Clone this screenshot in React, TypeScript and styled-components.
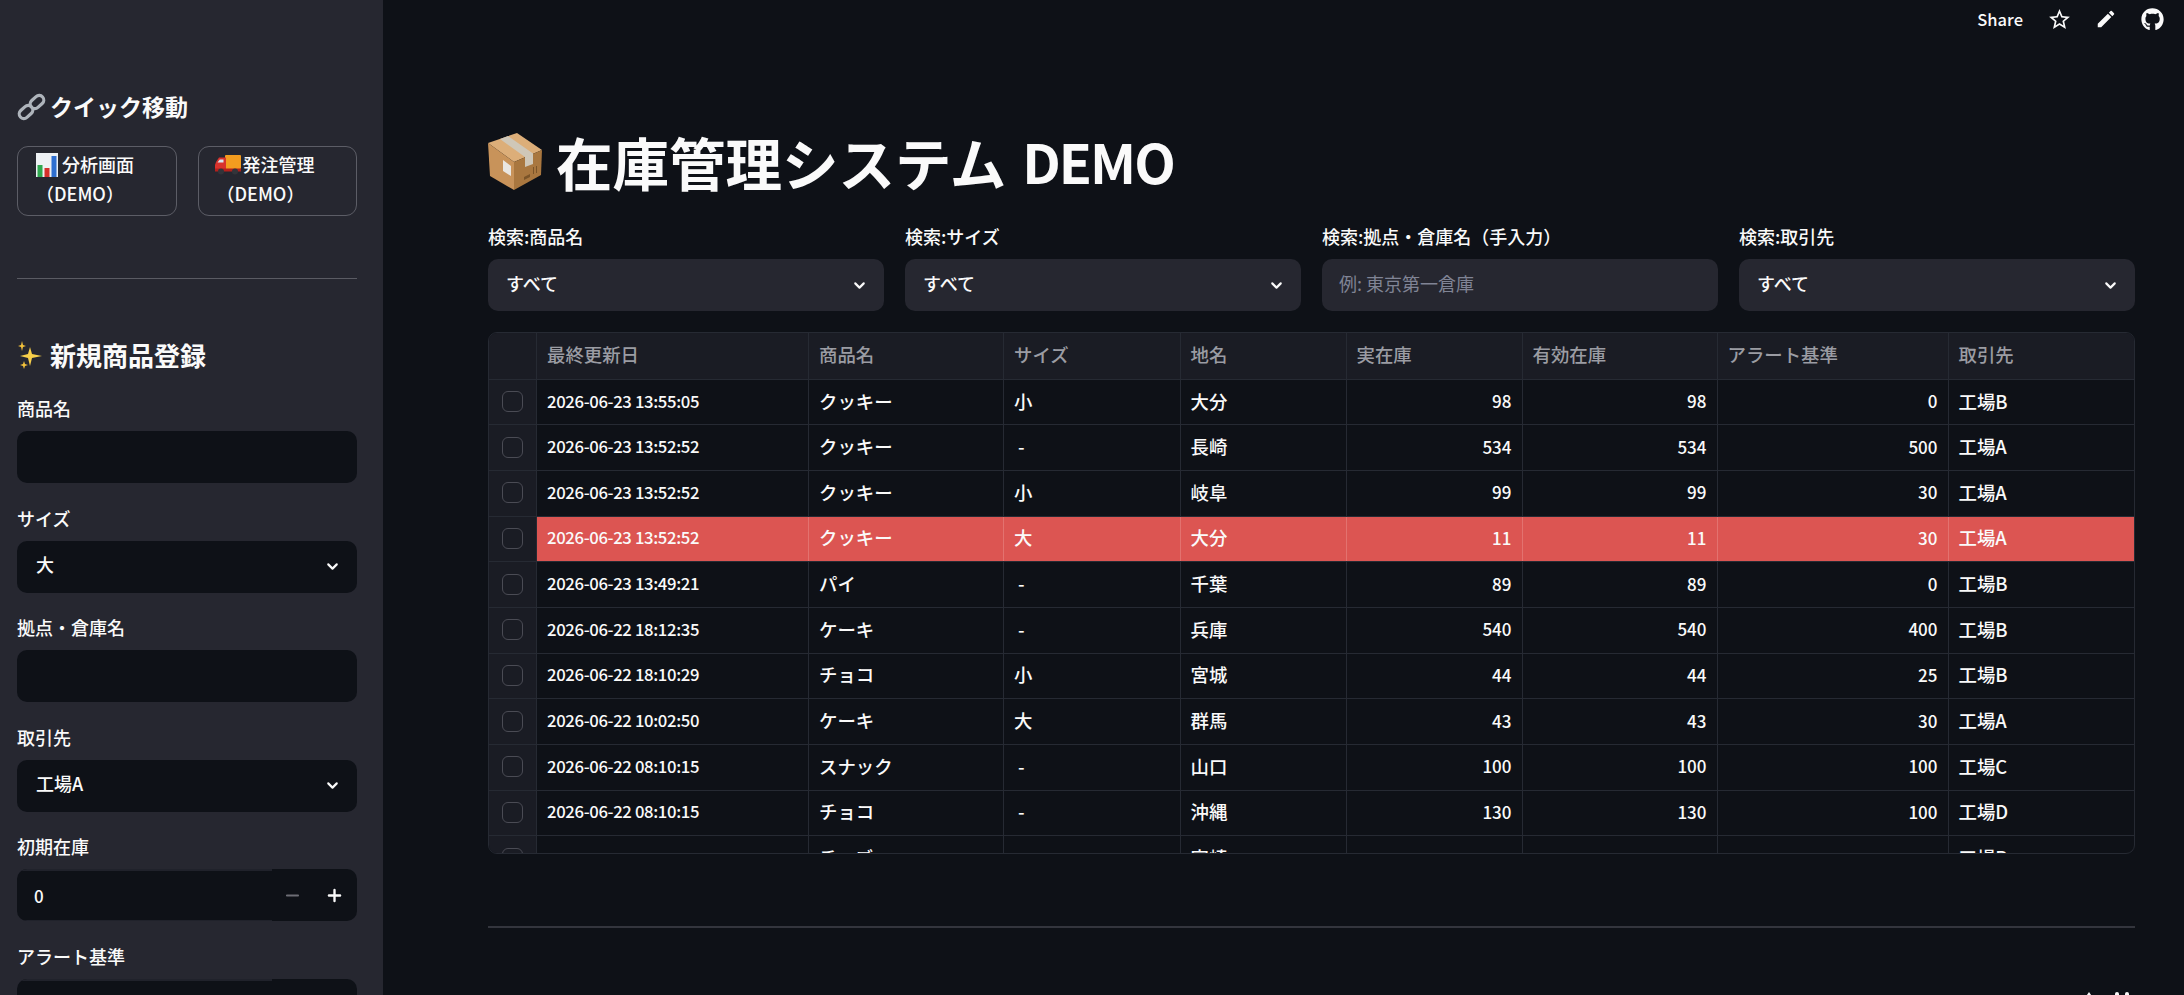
import React from 'react';
import styled, { createGlobalStyle } from 'styled-components';
import { ChevronDown, Minus, Plus } from 'lucide-react';
import { MdEdit, MdStarBorder } from 'react-icons/md';
import { FaGithub } from 'react-icons/fa';

const GlobalStyle = createGlobalStyle`
  html, body {
    margin: 0;
    height: 100%;
    overflow: hidden;
    background: #0e1117;
  }
  * {
    box-sizing: border-box;
  }
  body {
    font-family: "Noto Sans CJK JP", "Noto Sans", sans-serif;
    color: #fafafa;
  }
`;

const Page = styled.div`
  display: flex;
  width: 2184px;
  height: 995px;
  overflow: hidden;
`;

const Sidebar = styled.aside`
  width: 383px;
  height: 995px;
  flex-shrink: 0;
  overflow: hidden;
  background: #262730;
  padding: 91px 26px 0 17px;
`;

const SideHeading = styled.h3<{ $size: number; $gap: number }>`
  display: flex;
  align-items: center;
  gap: ${(p) => p.$gap}px;
  margin: 0;
  height: ${(p) => p.$size + 8}px;
  font-size: ${(p) => p.$size}px;
  font-weight: 700;
  line-height: 1;
`;

const QuickLinks = styled.div`
  display: grid;
  grid-template-columns: 1fr 1fr;
  gap: 21px;
  margin-top: 24px;
`;

const LinkButton = styled.a`
  display: block;
  height: 70px;
  padding: 3px 6px 0 18px;
  border: 1px solid #5c5d66;
  border-radius: 11px;
  font-size: 18px;
  font-weight: 500;
  line-height: 29px;
  color: #fafafa;
`;

const LinkLine = styled.span`
  display: flex;
  align-items: center;
  gap: 4px;
`;

const EmojiSlot = styled.span`
  display: inline-flex;
  width: 22px;
  justify-content: center;
`;

const SideRule = styled.hr`
  margin: 62px 0 59px;
  border: none;
  border-top: 1px solid #5a5b63;
`;

const Fields = styled.div`
  display: flex;
  flex-direction: column;
  gap: 21.6px;
  margin-top: 23px;
`;

const Field = styled.div`
  display: flex;
  flex-direction: column;
`;

const Label = styled.label`
  height: 26px;
  margin-bottom: 10px;
  font-size: 18px;
  line-height: 26px;
  font-weight: 500;
  color: #fafafa;
`;

const InputBox = styled.div<{ $dark?: boolean; $pad: number }>`
  display: flex;
  align-items: center;
  justify-content: space-between;
  height: 52px;
  padding: 0 16px 0 ${(p) => p.$pad}px;
  border-radius: 10px;
  background: ${(p) => (p.$dark ? '#0e1117' : '#262730')};
  font-size: 18px;
  font-weight: 500;
`;

const SelectText = styled.span`
  padding-bottom: 5px;
`;

const Placeholder = styled.span`
  color: #808495;
  font-size: 18px;
  font-weight: 400;
  padding-bottom: 4px;
`;

const Chevron = styled(ChevronDown)`
  flex-shrink: 0;
  color: #fafafa;
`;

const NumberBox = styled.div`
  display: flex;
  height: 52px;
  padding-right: 2px;
  border-radius: 10px;
  overflow: hidden;
  background: #0e1117;
`;

const NumberValue = styled.div`
  width: 255px;
  display: flex;
  align-items: center;
  padding-left: 17px;
  border-top: 2px solid #20222b;
  border-bottom: 1px solid #20222b;
  font-size: 17px;
  font-weight: 500;
`;

const Stepper = styled.button<{ $muted?: boolean }>`
  flex: 1;
  display: flex;
  align-items: center;
  justify-content: center;
  padding: 0;
  border: none;
  background: transparent;
  color: ${(p) => (p.$muted ? '#6c6d75' : '#fafafa')};
`;

const Main = styled.main`
  flex: 1;
  min-width: 0;
  padding: 0 49px 0 105px;
`;

const Toolbar = styled.div`
  position: absolute;
  top: 0;
  right: 0;
  display: flex;
  align-items: center;
  height: 38px;
  padding-right: 20px;
  font-size: 16.5px;
  font-weight: 500;
`;

const ToolIcon = styled.span<{ $left: number }>`
  display: inline-flex;
  margin-left: ${(p) => p.$left}px;
`;

const Title = styled.h1`
  display: flex;
  align-items: center;
  height: 80px;
  margin: 121px 0 0;
  font-size: 56.5px;
  font-weight: 700;
  line-height: 1;
  white-space: nowrap;
`;

const TitleIcon = styled.span`
  display: inline-flex;
  margin-right: 14px;
`;

const TitleLatin = styled.span`
  margin-left: 16px;
  font-size: 54px;
  letter-spacing: -2px;
`;

const Filters = styled.div`
  display: grid;
  grid-template-columns: repeat(4, 1fr);
  gap: 21px;
  margin-top: 22px;
`;

const Table = styled.div`
  height: 522px;
  margin-top: 21px;
  overflow: hidden;
  border: 1px solid #262a33;
  border-radius: 9px;
  background: #0e1117;
`;

const Row = styled.div<{ $header?: boolean }>`
  display: grid;
  grid-template-columns: 48px 272px 195px 176.5px 166px 176px 195px 231px 185.5px;
  height: ${(p) => (p.$header ? '46.7px' : '45.67px')};
  border-bottom: 1px solid #262a33;
`;

type CellTone = 'head' | 'body' | 'alert';
type CellKind = 'date' | 'number' | 'text';

const Cell = styled.div<{ $tone: CellTone; $kind: CellKind; $last?: boolean }>`
  display: flex;
  align-items: center;
  justify-content: ${(p) => (p.$kind === 'number' ? 'flex-end' : 'flex-start')};
  padding: 0 10px 3px;
  border-right: ${(p) => (p.$last ? 'none' : '1px solid')};
  border-color: ${(p) => (p.$tone === 'alert' ? '#e3726f' : '#262a33')};
  background: ${(p) => (p.$tone === 'head' ? '#1a1c24' : p.$tone === 'alert' ? '#dc5552' : 'transparent')};
  color: ${(p) => (p.$tone === 'head' ? '#9b9ca3' : '#fafafa')};
  font-size: ${(p) => (p.$kind === 'text' ? '18.4px' : p.$kind === 'date' ? '16.7px' : '17px')};
  font-weight: 500;
  letter-spacing: ${(p) => (p.$kind === 'date' ? '-0.35px' : '0')};
  white-space: nowrap;
`;

const CheckCell = styled.div`
  display: flex;
  align-items: center;
  justify-content: center;
  background: #1a1c24;
  border-right: 1px solid #262a33;
  padding-bottom: 1px;
`;

const CheckBox = styled.span`
  width: 21px;
  height: 21px;
  border: 1.5px solid #4a4b54;
  border-radius: 6px;
`;

const Dash = styled.span`
  margin-left: 4px;
`;

const MainRule = styled.hr`
  margin: 72px 0 0;
  border: none;
  border-top: 2px solid #33353d;
`;

const BottomIcons = styled.div`
  display: flex;
  justify-content: flex-end;
  gap: 16px;
  margin-top: 64px;
  padding-right: 6px;
`;

const LinkEmoji = () => (
  <svg width="30" height="28" viewBox="0 0 30 28" fill="none">
    <g stroke="#aeb4bb" strokeWidth="3.2">
      <rect x="-7.5" y="-4.6" width="15" height="9.2" rx="4.6" transform="translate(9 19) rotate(-42)" />
      <rect x="-7.5" y="-4.6" width="15" height="9.2" rx="4.6" transform="translate(20 9) rotate(-42)" />
    </g>
  </svg>
);

const SparkleEmoji = () => (
  <svg width="26" height="28" viewBox="0 0 26 28">
    <path d="M13 6 L15 13 L25 15 L15 17 L13 25 L11 17 L3 15 L11 13 Z" fill="#f7cf4a" />
    <path d="M5 0 L6 4 L9 5 L6 6 L5 10 L4 6 L1 5 L4 4 Z" fill="#f3c23b" />
    <path d="M7 20 L8 23 L11 24 L8 25 L7 28 L6 25 L3 24 L6 23 Z" fill="#f3c23b" />
  </svg>
);

const ChartEmoji = () => (
  <svg width="22" height="24" viewBox="0 0 22 24">
    <rect width="22" height="24" fill="#eef1f4" />
    <rect x="1.5" y="12" width="5" height="12" fill="#2fa84f" />
    <rect x="8.5" y="15" width="5" height="9" fill="#d5302c" />
    <rect x="15.5" y="3" width="5" height="21" fill="#2f6fd0" />
  </svg>
);

const TruckEmoji = () => (
  <svg width="26" height="20" viewBox="0 0 26 20" style={{ flexShrink: 0 }}>
    <rect x="10" y="0" width="16" height="14" rx="1" fill="#f39c1f" />
    <path d="M1 7 L4 2.5 H11 V16 H0 V10 Z" fill="#d8322c" />
    <path d="M2.5 7.5 L4.8 4.5 H8.5 V7.5 Z" fill="#d5e6f2" />
    <rect x="0" y="13.5" width="26" height="3" fill="#b4201c" />
    <circle cx="6" cy="16.5" r="3" fill="#33343a" />
    <circle cx="20" cy="16.5" r="3" fill="#33343a" />
  </svg>
);

const BoxEmoji = () => (
  <svg width="54" height="57" viewBox="0 0 54 57">
    <path d="M0 10 L29 0 L54 17 L26 29 Z" fill="#dcae79" />
    <path d="M0 10 L26 29 L26 57 L2 43 Z" fill="#c8935a" />
    <path d="M26 29 L54 17 L53 42 L26 57 Z" fill="#a9773f" />
    <path d="M12 6 L20 3 L45 20.5 L45 31 L37 34 L37 24 Z" fill="#cfc7b8" />
    <path d="M15 27 L23 33 L23 43 L15 38 Z" fill="#e9e6e1" />
    <path d="M36 44 L42 41 L42 44 L36 47 Z" fill="#7b5428" />
    <path d="M45 34 H46 V41 H45 Z M48 33 H49 V40 H48 Z" fill="#7b5428" />
  </svg>
);

const rows = [
  ['2026-06-23 13:55:05', 'クッキー', '小', '大分', '98', '98', '0', '工場B'],
  ['2026-06-23 13:52:52', 'クッキー', '-', '長崎', '534', '534', '500', '工場A'],
  ['2026-06-23 13:52:52', 'クッキー', '小', '岐阜', '99', '99', '30', '工場A'],
  ['2026-06-23 13:52:52', 'クッキー', '大', '大分', '11', '11', '30', '工場A'],
  ['2026-06-23 13:49:21', 'パイ', '-', '千葉', '89', '89', '0', '工場B'],
  ['2026-06-22 18:12:35', 'ケーキ', '-', '兵庫', '540', '540', '400', '工場B'],
  ['2026-06-22 18:10:29', 'チョコ', '小', '宮城', '44', '44', '25', '工場B'],
  ['2026-06-22 10:02:50', 'ケーキ', '大', '群馬', '43', '43', '30', '工場A'],
  ['2026-06-22 08:10:15', 'スナック', '-', '山口', '100', '100', '100', '工場C'],
  ['2026-06-22 08:10:15', 'チョコ', '-', '沖縄', '130', '130', '100', '工場D'],
  // only the tops of the kanji/kana show in this clipped row
  ['', 'チーズ', '', '宮崎', '', '', '', '工場B'],
];

const columns = ['最終更新日', '商品名', 'サイズ', '地名', '実在庫', '有効在庫', 'アラート基準', '取引先'];

const kindOf = (i: number): CellKind => (i === 0 ? 'date' : i >= 4 && i <= 6 ? 'number' : 'text');

const SelectValue = ({ value }: { value: string }) => (
  <>
    <SelectText>{value}</SelectText>
    <Chevron size={17} strokeWidth={3} />
  </>
);

const NumberField = () => (
  <NumberBox>
    <NumberValue>0</NumberValue>
    <Stepper $muted><Minus size={19} strokeWidth={2.6} /></Stepper>
    <Stepper><Plus size={19} strokeWidth={3} /></Stepper>
  </NumberBox>
);

export default function App() {
  return (
    <>
      <GlobalStyle />
      <Page>
        <Sidebar>
          <SideHeading $size={23} $gap={3}>
            <LinkEmoji />
            クイック移動
          </SideHeading>
          <QuickLinks>
            <LinkButton>
              <LinkLine>
                <EmojiSlot><ChartEmoji /></EmojiSlot>
                分析画面
              </LinkLine>
              <LinkLine>（DEMO）</LinkLine>
            </LinkButton>
            <LinkButton>
              <LinkLine>
                <EmojiSlot><TruckEmoji /></EmojiSlot>
                発注管理
              </LinkLine>
              <LinkLine>（DEMO）</LinkLine>
            </LinkButton>
          </QuickLinks>
          <SideRule />
          <SideHeading $size={26} $gap={7}>
            <SparkleEmoji />
            新規商品登録
          </SideHeading>
          <Fields>
            <Field>
              <Label>商品名</Label>
              <InputBox $dark $pad={17} />
            </Field>
            <Field>
              <Label>サイズ</Label>
              <InputBox $dark $pad={19}>
                <SelectValue value="大" />
              </InputBox>
            </Field>
            <Field>
              <Label>拠点・倉庫名</Label>
              <InputBox $dark $pad={17} />
            </Field>
            <Field>
              <Label>取引先</Label>
              <InputBox $dark $pad={19}>
                <SelectValue value="工場A" />
              </InputBox>
            </Field>
            <Field>
              <Label>初期在庫</Label>
              <NumberField />
            </Field>
            <Field>
              <Label>アラート基準</Label>
              <NumberField />
            </Field>
          </Fields>
        </Sidebar>

        <Main>
          <Toolbar>
            Share
            <ToolIcon $left={24}><MdStarBorder size={25} /></ToolIcon>
            <ToolIcon $left={23}><MdEdit size={22} /></ToolIcon>
            <ToolIcon $left={24}><FaGithub size={23} /></ToolIcon>
          </Toolbar>

          <Title>
            <TitleIcon><BoxEmoji /></TitleIcon>
            在庫管理システム
            <TitleLatin>DEMO</TitleLatin>
          </Title>

          <Filters>
            <Field>
              <Label>検索:商品名</Label>
              <InputBox $pad={18}>
                <SelectValue value="すべて" />
              </InputBox>
            </Field>
            <Field>
              <Label>検索:サイズ</Label>
              <InputBox $pad={18}>
                <SelectValue value="すべて" />
              </InputBox>
            </Field>
            <Field>
              <Label>検索:拠点・倉庫名（手入力）</Label>
              <InputBox $pad={17}>
                <Placeholder>例: 東京第一倉庫</Placeholder>
              </InputBox>
            </Field>
            <Field>
              <Label>検索:取引先</Label>
              <InputBox $pad={18}>
                <SelectValue value="すべて" />
              </InputBox>
            </Field>
          </Filters>

          <Table>
            <Row $header>
              <Cell $tone="head" $kind="text" />
              {columns.map((c, i) => (
                <Cell key={c} $tone="head" $kind="text" $last={i === columns.length - 1}>{c}</Cell>
              ))}
            </Row>
            {rows.map((row, r) => (
              <Row key={r}>
                <CheckCell><CheckBox /></CheckCell>
                {row.map((value, i) => (
                  <Cell
                    key={i}
                    $tone={r === 3 ? 'alert' : 'body'}
                    $kind={kindOf(i)}
                    $last={i === row.length - 1}
                  >
                    {value === '-' ? <Dash>-</Dash> : value}
                  </Cell>
                ))}
              </Row>
            ))}
          </Table>

          <MainRule />

          <BottomIcons>
            <svg width="20" height="20" viewBox="0 0 20 20" fill="#fafafa"><path d="M10 0 L17 10 H3 Z" /></svg>
            <svg width="14" height="20" viewBox="0 0 14 20" fill="#fafafa"><rect x="0" y="0" width="4" height="12" rx="2" /><rect x="10" y="0" width="4" height="12" rx="2" /></svg>
          </BottomIcons>
        </Main>
      </Page>
    </>
  );
}
